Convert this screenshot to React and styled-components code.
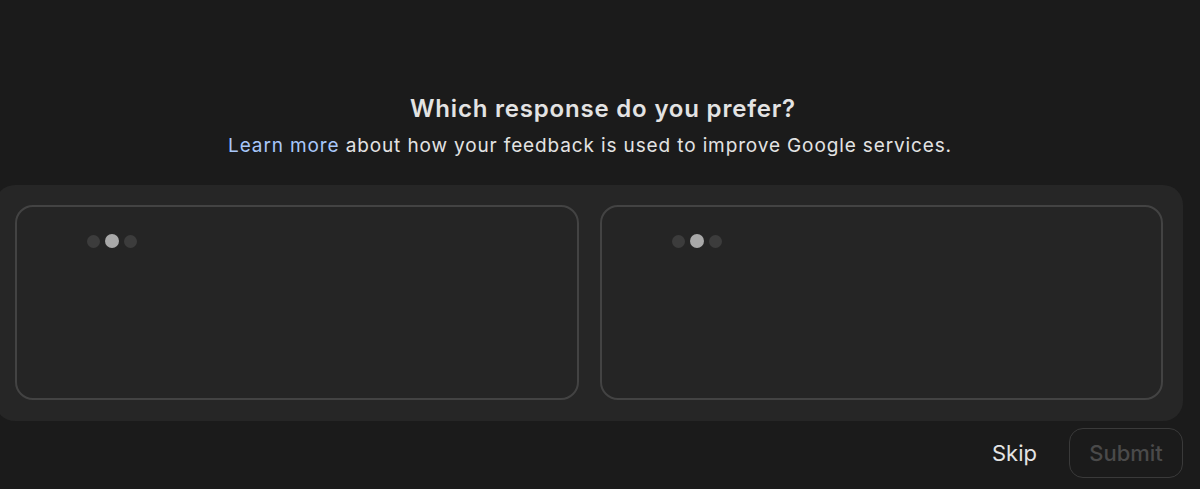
import React from 'react';
import styled, { createGlobalStyle } from 'styled-components';

const Global = createGlobalStyle`
  html, body {
    margin: 0;
    padding: 0;
    background: #1b1b1b;
    font-family: Inter, "Noto Sans", sans-serif;
    color: #e3e3e3;
  }
  body { height: 489px; overflow: hidden; }
`;

const Page = styled.div`
  display: flex;
  flex-direction: column;
  margin: 0 17px 0 -5px;
  padding-top: 94px;
`;

const Header = styled.div`
  display: flex;
  flex-direction: column;
  align-items: center;
  padding-left: 22px;
`;

const Title = styled.h2`
  margin: 0 0 0 6px;
  font-size: 24px;
  line-height: 30px;
  font-weight: 600;
  letter-spacing: 0.8px;
  color: #e3e3e3;
`;

const Subtitle = styled.p`
  margin: 9px 20px 0 0;
  font-size: 19px;
  line-height: 26px;
  letter-spacing: 0.87px;
  color: #e3e3e3;
`;

const LearnMore = styled.a`
  color: #a8c7fa;
  text-decoration: none;
`;

const Panel = styled.div`
  margin-top: 26px;
  display: grid;
  grid-template-columns: 1fr 1fr;
  gap: 21px;
  padding: 20px 20px 21px;
  background: #262626;
  border-radius: 20px;
`;

const Card = styled.div`
  height: 195px;
  box-sizing: border-box;
  border: 2px solid #434343;
  border-radius: 18px;
  background: #252525;
  padding: 27px 0 0 70px;
`;

const Dots = styled.div`
  display: flex;
  align-items: center;
  gap: 5px;
`;

const Dot = styled.span`
  width: ${p => (p.$active ? 14 : 13)}px;
  height: ${p => (p.$active ? 14 : 13)}px;
  border-radius: 50%;
  background: ${p => (p.$active ? '#a9a9a9' : '#3c3c3c')};
`;

const Footer = styled.div`
  display: flex;
  justify-content: flex-end;
  align-items: center;
  gap: 16px;
  margin-top: 7px;
`;

const SkipButton = styled.button`
  background: none;
  border: none;
  font-family: inherit;
  font-size: 22px;
  color: #e3e3e3;
  padding: 0 16px;
  height: 50px;
  cursor: pointer;
`;

const SubmitButton = styled.button`
  width: 114px;
  height: 50px;
  box-sizing: border-box;
  background: none;
  border: 1px solid #3a3a3a;
  border-radius: 14px;
  font-family: inherit;
  font-size: 22px;
  font-weight: 500;
  color: #4a4a4a;
`;

const Loading = () => (
  <Dots>
    <Dot />
    <Dot $active />
    <Dot />
  </Dots>
);

export default function App() {
  return (
    <>
      <Global />
      <Page>
        <Header>
          <Title>Which response do you prefer?</Title>
          <Subtitle>
            <LearnMore href="#">Learn more</LearnMore> about how your feedback is used to improve Google services.
          </Subtitle>
        </Header>
        <Panel>
          <Card><Loading /></Card>
          <Card><Loading /></Card>
        </Panel>
        <Footer>
          <SkipButton>Skip</SkipButton>
          <SubmitButton disabled>Submit</SubmitButton>
        </Footer>
      </Page>
    </>
  );
}
